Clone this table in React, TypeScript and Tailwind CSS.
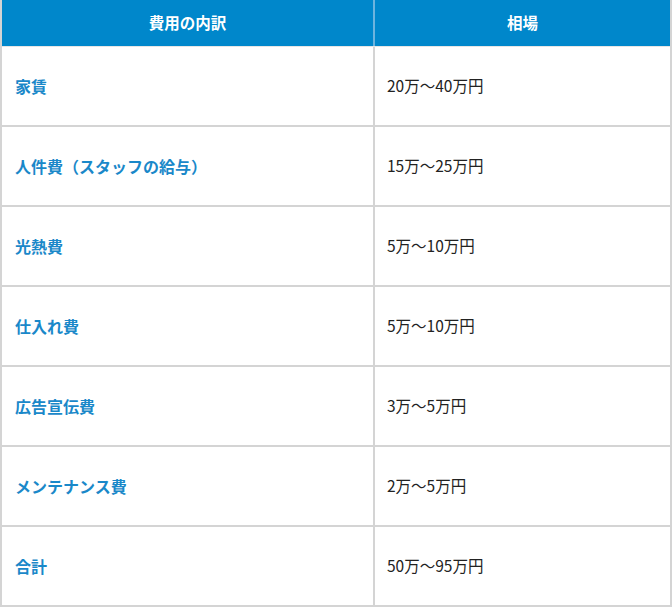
import React from 'react';

const rows: { item: string; price: string }[] = [
  { item: '家賃', price: '20万〜40万円' },
  { item: '人件費（スタッフの給与）', price: '15万〜25万円' },
  { item: '光熱費', price: '5万〜10万円' },
  { item: '仕入れ費', price: '5万〜10万円' },
  { item: '広告宣伝費', price: '3万〜5万円' },
  { item: 'メンテナンス費', price: '2万〜5万円' },
  { item: '合計', price: '50万〜95万円' },
];

const App: React.FC = () => {
  return (
    <div
      className="w-[672px] bg-white"
      style={{ fontFamily: '"Noto Sans CJK JP", "Noto Sans", sans-serif' }}
    >
      <div className="border-l-2 border-r-2 border-[#d4d4d4]">
        <div className="flex h-[47px] bg-[#0087cb] text-[15.5px] font-bold text-white border-b border-[#e6e6e6]">
          <div className="w-[371px] flex items-center justify-center">費用の内訳</div>
          <div className="w-[2px] bg-[#6db4de]" />
          <div className="flex-1 flex items-center justify-center">相場</div>
        </div>
        {rows.map((r) => (
          <div key={r.item} className="flex h-[80px] border-b-2 border-[#d4d4d4]">
            <div className="w-[371px] flex items-center pl-[13px] text-[16px] font-bold text-[#1a88c9]">
              {r.item}
            </div>
            <div className="w-[2px] bg-[#d4d4d4]" />
            <div className="flex-1 flex items-center pl-[12px] text-[15.5px] text-[#222]">
              {r.price}
            </div>
          </div>
        ))}
      </div>
    </div>
  );
};

export default App;
